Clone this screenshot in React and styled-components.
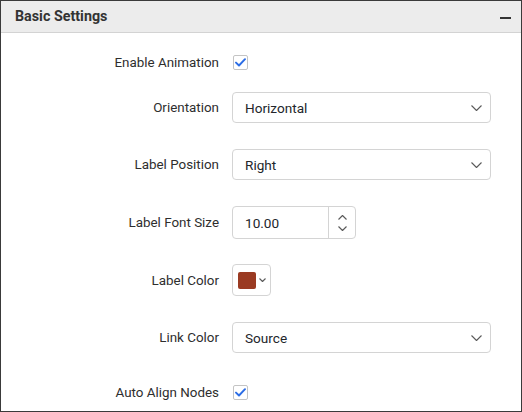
import React from "react";
import styled, { createGlobalStyle } from "styled-components";

const Global = createGlobalStyle`
  html, body { margin: 0; padding: 0; background: #fff; }
  body { font-family: Roboto, "Liberation Sans", sans-serif; }
  * { box-sizing: border-box; }
`;

const Panel = styled.div`
  width: 522px;
  height: 412px;
  border: 1px solid #3a3a3a;
  display: flex;
  flex-direction: column;
  overflow: hidden;
`;

const Header = styled.div`
  height: 32px;
  flex: none;
  background: #ececec;
  border-bottom: 1px solid #d3d3d3;
  display: flex;
  align-items: center;
  justify-content: space-between;
  padding: 0 10px 0 14px;
`;

const Title = styled.span`
  font-size: 14.3px;
  font-weight: 700;
  color: #333;
  padding-bottom: 2px;
`;

const Minus = styled.span`
  width: 11px;
  height: 2px;
  background: #333;
  margin-top: 2px;
`;

const Body = styled.div`
  display: flex;
  flex-direction: column;
  padding-top: 21px;
`;

const Row = styled.div`
  display: grid;
  grid-template-columns: 218px auto;
  column-gap: 13px;
  align-items: center;
  margin-top: ${(p) => p.$mt || 0}px;
  height: ${(p) => p.$h}px;
`;

const Label = styled.span`
  text-align: right;
  font-size: 13.4px;
  color: #2e2e2e;
  white-space: nowrap;
`;

const Check = styled.span`
  width: 15px;
  height: 15px;
  border: 1px solid #c4c4c4;
  border-radius: 2px;
  display: flex;
  align-items: center;
  justify-content: center;
  background: #fff;
  margin-left: 1px;
`;

const Select = styled.div`
  width: 259px;
  height: 31px;
  border: 1px solid #d4d4d4;
  border-radius: 4px;
  display: flex;
  align-items: center;
  justify-content: space-between;
  padding: 0 8px 0 12px;
  font-size: 13.6px;
  color: #23262b;
`;

const Numeric = styled.div`
  width: 124px;
  height: 33px;
  border: 1px solid #d4d4d4;
  border-radius: 4px;
  display: flex;
  font-size: 13.6px;
  color: #23262b;
`;

const NumValue = styled.span`
  flex: 1;
  display: flex;
  align-items: center;
  padding-left: 12px;
  border-right: 1px solid #d4d4d4;
`;

const Spin = styled.span`
  width: 26px;
  display: flex;
  flex-direction: column;
  align-items: center;
  justify-content: center;
  gap: 6px;
`;

const ColorBox = styled.div`
  width: 39px;
  height: 32px;
  border: 1px solid #d4d4d4;
  border-radius: 4px;
  display: flex;
  align-items: center;
  padding-left: 5px;
  gap: 3px;
`;

const Swatch = styled.span`
  width: 18px;
  height: 17px;
  border-radius: 2px;
  background: ${(p) => p.$color};
`;

const Chevron = ({ w = 11, h = 6, up = false, color = "#5a5a5a" }) => (
  <svg width={w} height={h} viewBox={`0 0 ${w} ${h}`} fill="none">
    <polyline
      points={up ? `0.5,${h - 0.5} ${w / 2},0.5 ${w - 0.5},${h - 0.5}` : `0.5,0.5 ${w / 2},${h - 0.5} ${w - 0.5},0.5`}
      stroke={color}
      strokeWidth="1.1"
      strokeLinejoin="round"
    />
  </svg>
);

const CheckMark = () => (
  <svg width="11" height="9" viewBox="0 0 11 9" fill="none">
    <polyline points="1,4.6 4,7.5 10,1.2" stroke="#2b6de6" strokeWidth="1.9" strokeLinecap="round" strokeLinejoin="round" />
  </svg>
);

const Dropdown = ({ value }) => (
  <Select>
    <span>{value}</span>
    <Chevron />
  </Select>
);

export default function App() {
  return (
    <>
      <Global />
      <Panel>
        <Header>
          <Title>Basic Settings</Title>
          <Minus />
        </Header>
        <Body>
          <Row $h={16}>
            <Label>Enable Animation</Label>
            <Check><CheckMark /></Check>
          </Row>
          <Row $h={31} $mt={22}>
            <Label>Orientation</Label>
            <Dropdown value="Horizontal" />
          </Row>
          <Row $h={31} $mt={26}>
            <Label>Label Position</Label>
            <Dropdown value="Right" />
          </Row>
          <Row $h={33} $mt={26}>
            <Label>Label Font Size</Label>
            <Numeric>
              <NumValue>10.00</NumValue>
              <Spin>
                <Chevron w={9} h={5} up />
                <Chevron w={9} h={5} />
              </Spin>
            </Numeric>
          </Row>
          <Row $h={32} $mt={25}>
            <Label>Label Color</Label>
            <ColorBox>
              <Swatch $color="#9a3a22" />
              <Chevron w={7} h={4} />
            </ColorBox>
          </Row>
          <Row $h={31} $mt={26}>
            <Label>Link Color</Label>
            <Dropdown value="Source" />
          </Row>
          <Row $h={16} $mt={31}>
            <Label>Auto Align Nodes</Label>
            <Check><CheckMark /></Check>
          </Row>
        </Body>
      </Panel>
    </>
  );
}
